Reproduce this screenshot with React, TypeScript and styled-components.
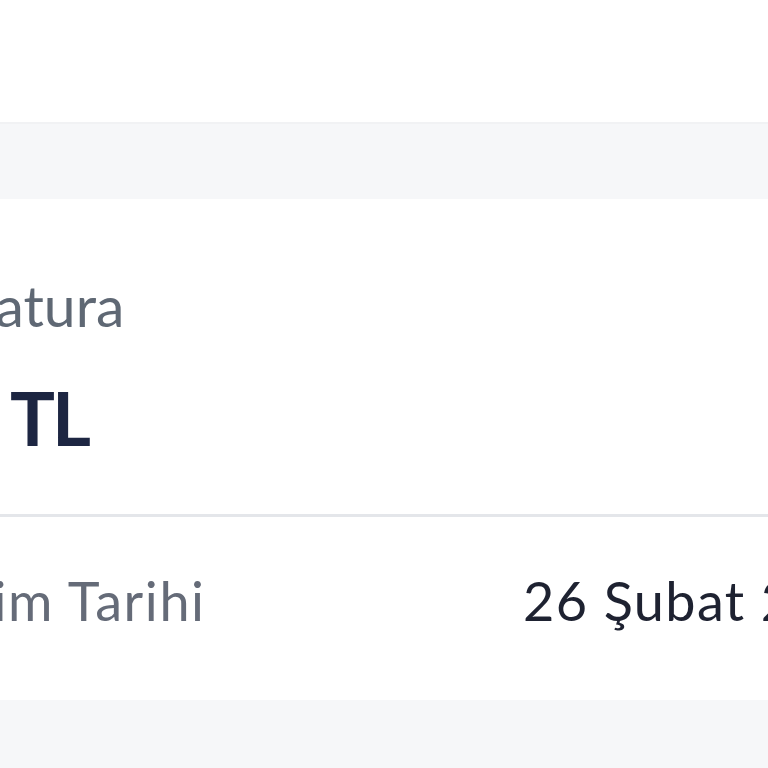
import React from 'react';
import styled, { createGlobalStyle } from 'styled-components';

const GlobalStyle = createGlobalStyle`
  html, body {
    margin: 0;
    padding: 0;
    background: #ffffff;
    overflow: hidden;
  }
  body {
    font-family: Lato, "Open Sans", "Noto Sans", sans-serif;
  }
`;

const Viewport = styled.div`
  width: 768px;
  height: 768px;
  overflow: hidden;
  background: #f6f7f9;
`;

const Screen = styled.div`
  width: 1100px;
  margin-left: -84px;
  display: flex;
  flex-direction: column;
`;

const Header = styled.div`
  height: 122px;
  background: #ffffff;
  border-bottom: 2px solid #f1f2f4;
`;

const Spacer = styled.div`
  height: 75px;
  background: #f6f7f9;
`;

const Card = styled.section`
  background: #ffffff;
  display: flex;
  flex-direction: column;
`;

const Summary = styled.div`
  padding: 72px 0 52px;
  display: flex;
  flex-direction: column;
  gap: 33px;
`;

const Label = styled.div`
  font-size: 57px;
  line-height: 1.2;
  color: #5f6874;
`;

const Amount = styled.div`
  font-size: 75px;
  line-height: 1.2;
  font-weight: 700;
  letter-spacing: -3px;
  color: #1d2642;
`;

const Divider = styled.hr`
  margin: 0;
  border: none;
  height: 3px;
  background: #e4e6ea;
`;

const Row = styled.div`
  display: grid;
  grid-template-columns: 620px 1fr;
  margin-left: -13px;
  padding: 52px 0 66px;
  font-size: 54px;
  line-height: 1.2;
  letter-spacing: 1.6px;
  white-space: nowrap;
`;

const RowLabel = styled.span`
  color: #656b78;
`;

const RowValue = styled.span`
  color: #1e2231;
  letter-spacing: 1.4px;
`;

export default function App() {
  return (
    <>
      <GlobalStyle />
      <Viewport>
        <Screen>
          <Header />
          <Spacer />
          <Card>
            <Summary>
              <Label>e-Fatura</Label>
              <Amount>90 TL</Amount>
            </Summary>
            <Divider />
            <Row>
              <RowLabel>Kesim Tarihi</RowLabel>
              <RowValue>26 Şubat 2024</RowValue>
            </Row>
          </Card>
        </Screen>
      </Viewport>
    </>
  );
}
